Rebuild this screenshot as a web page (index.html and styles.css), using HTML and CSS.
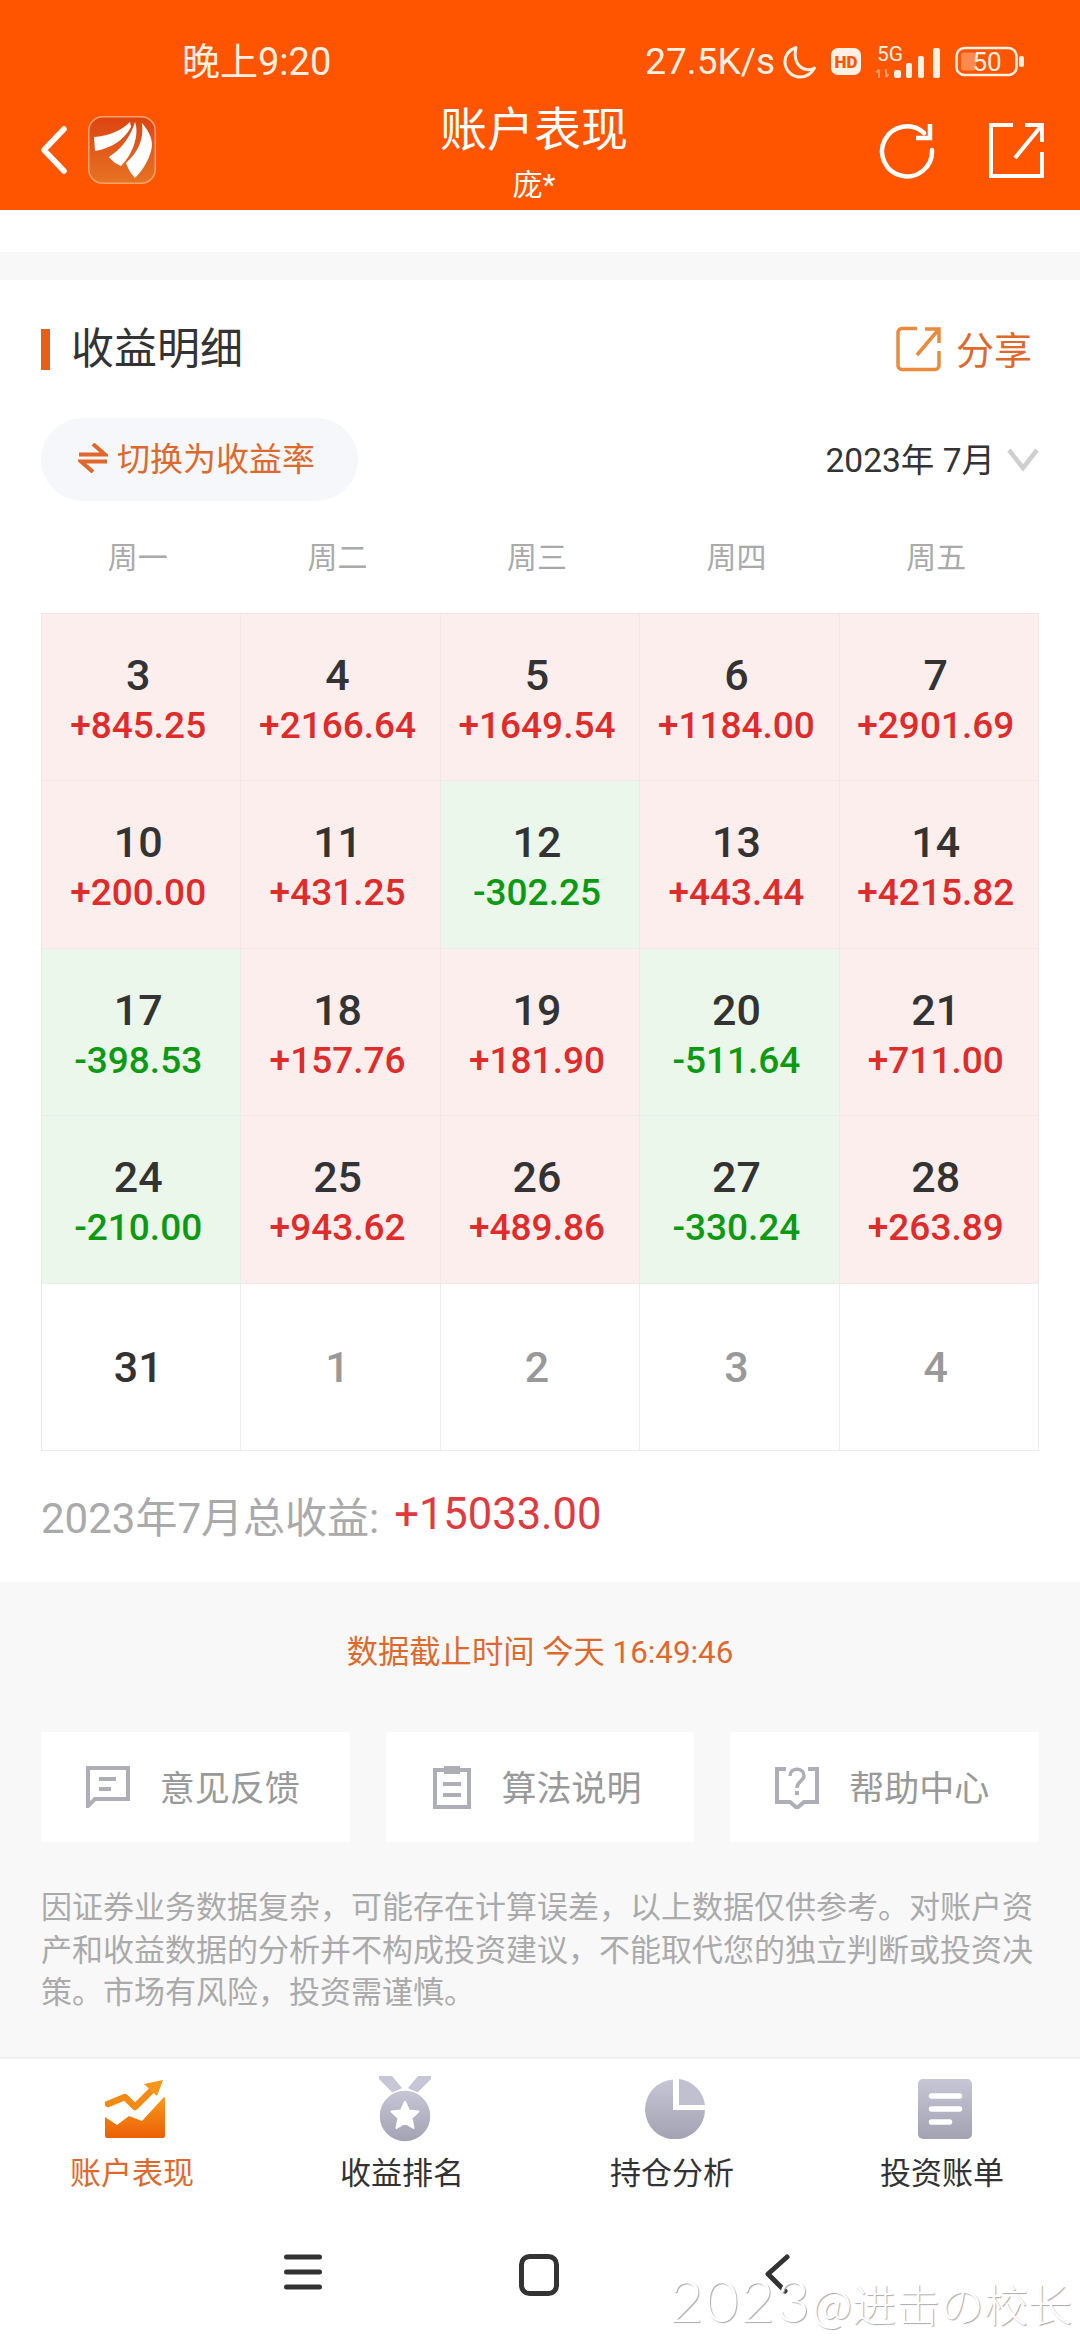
FILE: index.html
```html
<!DOCTYPE html>
<html lang="zh">
<head>
  <meta charset="UTF-8">
  <title>账户表现</title>
  <link rel="stylesheet" href="styles.css">
</head>
<body>
<div class="page">

  <header class="topbar">
    <div class="status">
      <span class="clock">晚上9:20</span>
      <div class="status-right">
        <span class="speed">27.5K/s</span>
        <svg class="st-moon" width="34" height="34" viewBox="0 0 34 34"><path d="M13 2.500C6 5 2 10.500 2 17c0 8.500 7 15 15 15 6.500 0 11.500-3.500 14.500-9-2.500 1.500-5.500 2-8 1.500C15.500 23.500 10 15 13 2.500z" fill="none" stroke="#fff0e4" stroke-width="3" stroke-linejoin="round"/></svg>
        <svg class="st-hd" width="30" height="28" viewBox="0 0 30 28"><rect width="30" height="27" rx="7" fill="#fff0e4"/><text x="15" y="19.500" text-anchor="middle" class="hd-text">HD</text></svg>
        <svg class="st-net" width="66" height="38" viewBox="0 0 66 38"><text x="2" y="18" class="net-text">5G</text><path d="M4 35v-8M1.500 29.500L4 26.500M11 26v8M13.500 31L11 34" stroke="#ff9a66" stroke-width="2" fill="none"/><rect x="19" y="27" width="7" height="8" rx="2" fill="#fff0e4"/><rect x="31" y="20" width="6" height="15" rx="2" fill="#fff0e4"/><rect x="43" y="13" width="6" height="22" rx="2" fill="#fff0e4"/><rect x="58" y="5" width="7" height="30" rx="2" fill="#fff0e4"/></svg>
        <svg class="st-batt" width="70" height="32" viewBox="0 0 70 32"><rect x="1.500" y="2" width="60" height="27" rx="8" fill="none" stroke="#fff0e4" stroke-width="2.500"/><rect x="6" y="6.500" width="15" height="18" rx="3" fill="#ff8a4d"/><text x="32" y="25" text-anchor="middle" class="batt-text">50</text><rect x="64" y="10" width="5" height="11" rx="2" fill="#fff0e4"/></svg>
      </div>
    </div>

    <div class="nav">
      <div class="nav-left">
        <svg width="28" height="50" viewBox="0 0 28 50"><path d="M24 4L4 25l20 21" fill="none" stroke="#fff" stroke-width="5.500" stroke-linecap="round" stroke-linejoin="round"/></svg>
        <svg class="logo" width="68" height="68" viewBox="0 0 68 68">
          <defs><linearGradient id="logoBg" x1="0" y1="0" x2="0" y2="1"><stop offset="0" stop-color="#dd4312"/><stop offset="1" stop-color="#e67324"/></linearGradient></defs>
          <rect x="0.750" y="0.750" width="66.500" height="66.500" rx="14" fill="url(#logoBg)" stroke="#ffa468" stroke-width="1.500"/>
          <path d="M6 21C20 20 33 15 42 6L43 11C36 24 24 32 7 35Z" fill="#fff"/>
          <path d="M47 6C51 16 47 36 33 50C28 48 24 45 21 41C33 33 42 22 47 6Z" fill="#fff"/>
          <path d="M54 7C62 16 66 26 63 35C60 46 54 55 47 62C43 58 40 53 38 47C50 36 56 24 54 7Z" fill="#fff"/>
        </svg>
      </div>
      <div class="nav-title">
        <div class="title">账户表现</div>
        <div class="subtitle">庞*</div>
      </div>
      <div class="nav-right">
        <svg width="58" height="58" viewBox="0 0 58 58"><path d="M47 12A25 25 0 1 0 55 29" fill="none" stroke="#fff" stroke-width="4.500" stroke-linecap="round"/><path d="M53 3v14H39" fill="none" stroke="#fff" stroke-width="4.500"/></svg>
        <svg width="56" height="56" viewBox="0 0 56 56"><path d="M24 3H2v51h51V30" fill="none" stroke="#fff" stroke-width="4"/><path d="M53 3L26 36M36 3h17v17" fill="none" stroke="#fff" stroke-width="4"/></svg>
      </div>
    </div>
  </header>

  <div class="band-white"></div>
  <div class="band-gray"></div>

  <section class="card">
    <div class="card-head">
      <h2 class="card-title">收益明细</h2>
      <div class="share">
        <svg width="46" height="46" viewBox="0 0 46 46"><path d="M21 2.500H6A4 4 0 0 0 2 6.500v33A4 4 0 0 0 6 43.500h33a4 4 0 0 0 4-4V25" fill="none" stroke="#ec8a3c" stroke-width="3.500"/><path d="M43 3L21 29M29 3h14v14" fill="none" stroke="#ec8a3c" stroke-width="3.500"/></svg>
        <span>分享</span>
      </div>
    </div>

    <div class="toolbar">
      <div class="switch">
        <svg width="30" height="30" viewBox="0 0 30 30"><path d="M1 11.500h26L15 1M29 18.500H3l12 10.500" fill="none" stroke="#e2662a" stroke-width="4"/></svg>
        <span>切换为收益率</span>
      </div>
      <div class="month">
        <span>2023年 7月</span>
        <svg width="32" height="24" viewBox="0 0 32 24"><path d="M2 2l14 18L30 2" fill="none" stroke="#cfcfcf" stroke-width="4.500"/></svg>
      </div>
    </div>

    <div class="weekdays">
      <span>周一</span><span>周二</span><span>周三</span><span>周四</span><span>周五</span>
    </div>

    <div class="calendar">
      <div class="day up"><b>3</b><i>+845.25</i></div>
      <div class="day up"><b>4</b><i>+2166.64</i></div>
      <div class="day up"><b>5</b><i>+1649.54</i></div>
      <div class="day up"><b>6</b><i>+1184.00</i></div>
      <div class="day up"><b>7</b><i>+2901.69</i></div>

      <div class="day up"><b>10</b><i>+200.00</i></div>
      <div class="day up"><b>11</b><i>+431.25</i></div>
      <div class="day down"><b>12</b><i>-302.25</i></div>
      <div class="day up"><b>13</b><i>+443.44</i></div>
      <div class="day up"><b>14</b><i>+4215.82</i></div>

      <div class="day down"><b>17</b><i>-398.53</i></div>
      <div class="day up"><b>18</b><i>+157.76</i></div>
      <div class="day up"><b>19</b><i>+181.90</i></div>
      <div class="day down"><b>20</b><i>-511.64</i></div>
      <div class="day up"><b>21</b><i>+711.00</i></div>

      <div class="day down"><b>24</b><i>-210.00</i></div>
      <div class="day up"><b>25</b><i>+943.62</i></div>
      <div class="day up"><b>26</b><i>+489.86</i></div>
      <div class="day down"><b>27</b><i>-330.24</i></div>
      <div class="day up"><b>28</b><i>+263.89</i></div>

      <div class="day empty"><b>31</b></div>
      <div class="day empty next"><b>1</b></div>
      <div class="day empty next"><b>2</b></div>
      <div class="day empty next"><b>3</b></div>
      <div class="day empty next"><b>4</b></div>
    </div>

    <div class="total">2023年7月总收益: <span>+15033.00</span></div>
  </section>

  <section class="foot">
    <div class="updated">数据截止时间 今天 16:49:46</div>
    <div class="links">
      <div class="link">
        <svg width="44" height="42" viewBox="0 0 44 42"><path d="M2 2h40v31H9l-7 7z" fill="none" stroke="#aeaeb6" stroke-width="4"/><path d="M13 13h17M13 23h12" stroke="#aeaeb6" stroke-width="4"/></svg>
        <span>意见反馈</span>
      </div>
      <div class="link">
        <svg width="38" height="44" viewBox="0 0 38 44"><path d="M11 5H2v37h34V5h-9" fill="none" stroke="#aeaeb6" stroke-width="4"/><rect x="11" y="1" width="16" height="8" fill="#aeaeb6"/><path d="M10 19h18M10 30h18" stroke="#aeaeb6" stroke-width="4"/></svg>
        <span>算法说明</span>
      </div>
      <div class="link">
        <svg width="44" height="44" viewBox="0 0 44 44"><path d="M11 4H2v33h13l7 6 7-6h13V4h-9" fill="none" stroke="#aeaeb6" stroke-width="4"/><path d="M15 11c0-9 14-9 14 0 0 5-7 5-7 12" fill="none" stroke="#aeaeb6" stroke-width="3.500"/><rect x="20" y="26" width="4" height="4" fill="#aeaeb6"/></svg>
        <span>帮助中心</span>
      </div>
    </div>
    <p class="notice">因证券业务数据复杂，可能存在计算误差，以上数据仅供参考。对账户资产和收益数据的分析并不构成投资建议，不能取代您的独立判断或投资决策。市场有风险，投资需谨慎。</p>
  </section>

  <nav class="tabs">
    <div class="tab active">
      <div class="tab-icon">
        <svg width="60" height="60" viewBox="0 0 60 60">
          <defs>
            <linearGradient id="tabOrange" x1="0" y1="0" x2="0" y2="1"><stop offset="0" stop-color="#f79a1a"/><stop offset="1" stop-color="#ec5f06"/></linearGradient>
            <linearGradient id="tabGray" x1="0" y1="0" x2="0" y2="1"><stop offset="0" stop-color="#c6c6d6"/><stop offset="1" stop-color="#a2a2b2"/></linearGradient>
          </defs>
          <path d="M0 38l12 8 12-9 13 5 22-24q1 0 1 2v37q0 2-2 2H2q-2 0-2-2z" fill="url(#tabOrange)"/>
          <path d="M3 25l17-7 10 10 18-18" fill="none" stroke="#f48a14" stroke-width="6.500" stroke-linecap="round" stroke-linejoin="round"/>
          <path d="M58 1L39 5l13 12z" fill="#f7961a"/>
        </svg>
      </div>
      <span>账户表现</span>
    </div>
    <div class="tab">
      <div class="tab-icon">
        <svg width="54" height="66" viewBox="0 0 54 66">
          <path d="M1 0h13l10 12-9 5L1 3zM53 0H40l-10 12 9 5L53 3z" fill="#c6c6d6"/>
          <circle cx="27" cy="40" r="26" fill="url(#tabGray)" stroke="#fff" stroke-width="1.500"/>
          <path d="M27 26l4 8.500 9.500 1-7 6.500 2 10L27 47l-8.500 5 2-10-7-6.500 9.500-1z" fill="#fff" stroke="#fff" stroke-width="2" stroke-linejoin="round"/>
        </svg>
      </div>
      <span>收益排名</span>
    </div>
    <div class="tab">
      <div class="tab-icon">
        <svg width="60" height="60" viewBox="0 0 60 60">
          <path d="M34 0A30 30 0 0 1 60 26H34z" fill="#c0c0d0"/>
          <path d="M28 0.500A30 30 0 1 0 60 31H28z" fill="url(#tabGray)"/>
        </svg>
      </div>
      <span>持仓分析</span>
    </div>
    <div class="tab">
      <div class="tab-icon">
        <svg width="54" height="60" viewBox="0 0 54 60">
          <rect width="54" height="60" rx="5" fill="url(#tabGray)"/>
          <path d="M13.500 17h28M13.500 30h28M13.500 43h18" stroke="#fff" stroke-width="5.500" stroke-linecap="round"/>
        </svg>
      </div>
      <span>投资账单</span>
    </div>
  </nav>

  <div class="sysnav">
    <svg width="38" height="36" viewBox="0 0 38 36"><path d="M2.500 3h33M2.500 18h33M2.500 33h33" stroke="#333" stroke-width="5" stroke-linecap="round"/></svg>
    <svg class="sys-home" width="40" height="42" viewBox="0 0 40 42"><rect x="2.500" y="2.500" width="35" height="37" rx="8" fill="none" stroke="#333" stroke-width="5"/></svg>
    <svg class="sys-back" width="26" height="40" viewBox="0 0 26 40"><path d="M23 3L4 20l17 17" fill="none" stroke="#333" stroke-width="5" stroke-linecap="round" stroke-linejoin="round"/></svg>
  </div>

  <div class="watermark"><span>2023</span>@进击の校长</div>
</div>
</body>
</html>
```

FILE: styles.css
```css
* {
  box-sizing: border-box;
}

body {
  margin: 0;
  background: #fff;
  font-family: Roboto, "Noto Sans CJK SC", sans-serif;
  color: #333;
}

svg {
  display: block;
  flex: none;
}

.page {
  position: relative;
  width: 1080px;
  height: 2340px;
  overflow: hidden;
  display: flex;
  flex-direction: column;
}

/* top orange bar */
.topbar {
  height: 210px;
  background: #ff5500;
  color: #fff;
}

.status {
  height: 94px;
  padding: 30px 55px 0 182px;
  display: flex;
  justify-content: space-between;
  align-items: center;
  color: #fff0e4;
}

.clock {
  font-size: 38px;
  line-height: 64px;
}

.status-right {
  display: flex;
  align-items: center;
}

.speed {
  font-size: 37px;
  line-height: 64px;
  margin-right: 8px;
}

.st-hd {
  margin-left: 14px;
}

.st-net {
  margin-left: 14px;
}

.st-batt {
  margin-left: 14px;
}

.hd-text {
  font-family: Roboto, sans-serif;
  font-size: 17px;
  font-weight: 900;
  fill: #ff5500;
}

.net-text {
  font-family: Roboto, sans-serif;
  font-size: 21px;
  fill: #fff0e4;
}

.batt-text {
  font-family: Roboto, sans-serif;
  font-size: 26px;
  fill: #fff0e4;
}

.nav {
  display: grid;
  grid-template-columns: 398px 192px 1fr;
  padding: 10px 35px 0 40px;
}

.nav-left {
  display: flex;
  align-items: center;
  gap: 20px;
  height: 92px;
}

.nav-title {
  text-align: center;
  white-space: nowrap;
}

.title {
  font-size: 47px;
  line-height: 52px;
}

.subtitle {
  font-size: 30px;
  line-height: 34px;
  margin-top: 12px;
}

.nav-right {
  display: flex;
  justify-content: flex-end;
  align-items: center;
  gap: 54px;
  height: 92px;
}

.band-white {
  height: 42px;
}

.band-gray {
  height: 28px;
  background: #f8f8f8;
}

/* main card */
.card {
  padding: 48px 41px 0;
  height: 1302px;
  background: #fff;
}

.card-head {
  display: flex;
  justify-content: space-between;
  align-items: center;
  height: 42px;
}

.card-title {
  margin: 0;
  padding-left: 21px;
  border-left: 9px solid #e2601a;
  font-size: 43px;
  line-height: 41px;
  font-weight: 400;
  color: #333;
}

.share {
  display: flex;
  align-items: center;
  gap: 14px;
  padding-right: 7px;
  font-size: 38px;
  color: #dd6a2c;
}

.share span {
  padding-bottom: 3px;
}

.toolbar {
  margin-top: 48px;
  display: flex;
  justify-content: space-between;
  align-items: center;
}

.switch {
  width: 317px;
  height: 83px;
  padding-left: 37px;
  border-radius: 42px;
  background: #f5f7fa;
  display: flex;
  align-items: center;
  gap: 9px;
  font-size: 33px;
  color: #dd6a2c;
}

.switch svg {
  margin-top: -4px;
}

.switch span {
  padding-bottom: 5px;
}

.month {
  display: flex;
  align-items: center;
  gap: 12px;
  font-size: 33.500px;
  color: #333;
}

.month span {
  padding-bottom: 5px;
}

.weekdays {
  height: 112px;
  display: grid;
  grid-template-columns: repeat(5, 1fr);
  align-items: center;
  text-align: center;
  font-size: 30px;
  color: #aaa;
}

.weekdays span {
  padding: 0 6px 5px 0;
}

/* calendar */
.calendar {
  display: grid;
  grid-template-columns: repeat(5, 1fr);
  grid-auto-rows: 167.400px;
  border-top: 1px solid #f0e6e6;
  border-left: 1px solid #f0e6e6;
}

.day {
  padding: 39px 6px 0 0;
  text-align: center;
  border-right: 1px solid #f3e8e8;
  border-bottom: 1px solid #f3e8e8;
}

.day b {
  display: block;
  font-size: 43px;
  line-height: 44px;
  font-weight: 500;
  color: #333;
}

.day i {
  display: block;
  margin-top: 7px;
  font-size: 37px;
  line-height: 44px;
  font-style: normal;
  font-weight: 500;
}

.up {
  background: #fdeeee;
}

.up i {
  color: #e02b2b;
}

.down {
  background: #ecf7ec;
  border-color: #e6f0e6;
}

.down i {
  color: #0b9a12;
}

.empty {
  padding-top: 61px;
  background: #fff;
  border-color: #ececec;
}

.next b {
  color: #999;
}

.total {
  height: 132px;
  padding-bottom: 4px;
  display: flex;
  align-items: center;
  gap: 15px;
  font-size: 42px;
  color: #aaa;
}

.total span {
  font-size: 43.500px;
  color: #e0393e;
}

/* gray footer */
.foot {
  flex: 1;
  padding: 51px 41px 0;
  background: #f8f8f8;
}

.updated {
  text-align: center;
  font-size: 31.300px;
  line-height: 40px;
  color: #dd6a2c;
}

.links {
  margin-top: 59px;
  display: grid;
  grid-template-columns: repeat(3, 1fr);
  gap: 36px;
}

.link {
  height: 110px;
  padding-right: 5px;
  background: #fff;
  display: flex;
  justify-content: center;
  align-items: center;
  gap: 30px;
  font-size: 35px;
  color: #999;
}

.link span {
  padding-bottom: 3px;
}

.notice {
  margin: 45px 0 0;
  font-size: 31px;
  line-height: 42.500px;
  color: #aaa;
}

/* bottom tabs */
.tabs {
  height: 150px;
  padding-top: 17px;
  border-top: 2px solid #efefef;
  background: #fff;
  display: grid;
  grid-template-columns: repeat(4, 270px);
}

.tab {
  text-align: center;
  font-size: 31px;
  color: #333;
}

.tab-icon {
  height: 66px;
  display: flex;
  justify-content: center;
  align-items: center;
}

.tab span {
  display: block;
  margin-top: 11px;
  padding-right: 6px;
  line-height: 42px;
}

.active {
  color: #dd6a2c;
}

.sysnav {
  flex: none;
  height: 133px;
  padding: 47px 0 0 284px;
  display: flex;
  align-items: flex-start;
  background: #fff;
}

.sys-home {
  margin-left: 197px;
}

.sys-back {
  margin-left: 205px;
}

.watermark {
  position: absolute;
  right: 8px;
  bottom: 12px;
  font-family: "Noto Sans CJK SC", sans-serif;
  font-size: 44px;
  line-height: 50px;
  font-weight: 300;
  color: #fff;
  text-shadow: 1px 1px 1px #aaa;
}

.watermark span {
  font-family: Lato, sans-serif;
  font-size: 58px;
  letter-spacing: 2px;
}
```
